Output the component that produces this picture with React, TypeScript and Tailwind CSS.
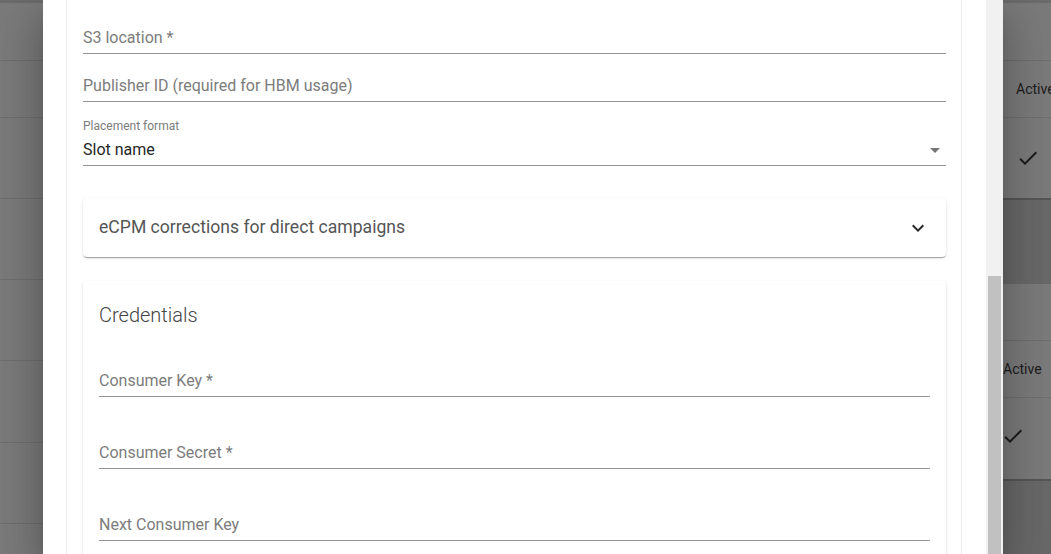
import React from "react";

const Check = ({ className = "" }: { className?: string }) => (
  <svg viewBox="0 0 24 24" width="24" height="24" className={className} fill="#1c1c1c">
    <path d="M9 16.17L4.83 12l-1.42 1.41L9 19 21 7l-1.41-1.41z" />
  </svg>
);

function Field({ label, h }: { label: string; h: string }) {
  return (
    <div className={`${h} flex items-end border-b border-[#949494] pb-[6px]`}>
      <span className="text-[16px] leading-[19px] text-[#7c7c7c]">{label}</span>
    </div>
  );
}

export default function App() {
  return (
    <div className="relative w-[1051px] h-[554px] overflow-hidden font-['Roboto',sans-serif] bg-[#7a7a7a]">
      {/* page behind the backdrop */}
      <div className="flex h-full">
        <div className="w-[43px] flex flex-col">
          <div className="h-[3px] bg-[#6b6b6b]" />
          <div className="h-[58px] border-b border-[#6e6e6e]" />
          <div className="h-[57px] border-b border-[#6e6e6e]" />
          <div className="h-[81px] border-b border-[#6e6e6e]" />
          <div className="h-[81px] border-b border-[#6e6e6e]" />
          <div className="h-[81px] border-b border-[#6e6e6e]" />
          <div className="h-[82px] border-b border-[#6e6e6e]" />
          <div className="h-[81px] border-b border-[#6e6e6e]" />
          <div className="flex-1" />
        </div>
        <div className="flex-1" />
        <div className="w-[48px] flex flex-col text-[14px] text-[#1c1c1c]">
          <div className="h-[3px] bg-[#6b6b6b]" />
          <div className="h-[58px] border-b border-[#6e6e6e]" />
          <div className="h-[57px] border-b border-[#6e6e6e] flex items-center pl-[13px] whitespace-nowrap">Active</div>
          <div className="h-[82px] border-b-2 border-[#555555] flex items-center pl-[13px]">
            <Check />
          </div>
          <div className="h-[84px] bg-[#686868]" />
          <div className="h-[57px] border-b border-[#6e6e6e]" />
          <div className="h-[57px] border-b border-[#6e6e6e] flex items-center whitespace-nowrap">Active</div>
          <div className="h-[83px] border-b-2 border-[#555555] flex items-center pb-[6px]">
            <Check className="-ml-[2px]" />
          </div>
          <div className="flex-1 bg-[#686868]" />
        </div>
      </div>

      {/* dialog */}
      <div className="absolute left-[43px] top-0 w-[960px] h-full flex bg-white shadow-[0_11px_15px_-7px_rgba(0,0,0,0.2),0_24px_38px_3px_rgba(0,0,0,0.14),0_9px_46px_8px_rgba(0,0,0,0.12)]">
        <div className="flex-1 pl-[23px] pr-[24px] overflow-hidden">
          <div className="h-full border-x border-[#ececec] pl-4 pr-[15px]">
            <Field label="S3 location *" h="h-[54px]" />
            <Field label="Publisher ID (required for HBM usage)" h="h-[48px]" />
            <div className="h-[64px] flex flex-col justify-end border-b border-[#949494] pb-[6px]">
              <span className="text-[12px] leading-[14px] text-[#7c7c7c]">Placement format</span>
              <div className="mt-[7px] h-[19px] flex items-center justify-between">
                <span className="text-[16px] leading-[19px] text-[#262626]">Slot name</span>
                <svg viewBox="0 0 24 24" width="24" height="24" fill="#757575" className="mr-[-1px]">
                  <path d="M7 10l5 5 5-5z" />
                </svg>
              </div>
            </div>

            <div className="mt-[32px] h-[59px] rounded-[4px] bg-white shadow-[0_2px_1px_-1px_rgba(0,0,0,0.2),0_1px_1px_0_rgba(0,0,0,0.14),0_1px_3px_0_rgba(0,0,0,0.12)] flex items-center justify-between pl-4 pr-4">
              <span className="text-[17.6px] leading-[21px] text-[#555555]">eCPM corrections for direct campaigns</span>
              <svg viewBox="0 0 24 24" width="24" height="24" fill="#2a2a2a">
                <path d="M16.59 8.59L12 13.17 7.41 8.59 6 10l6 6 6-6z" />
              </svg>
            </div>

            <div className="mt-[24px] rounded-[4px] bg-white shadow-[0_2px_1px_-1px_rgba(0,0,0,0.2),0_1px_1px_0_rgba(0,0,0,0.14),0_1px_3px_0_rgba(0,0,0,0.12)] px-4 pt-[20px] pb-6">
              <div className="text-[20px] leading-[28px] font-light text-[#444444]">Credentials</div>
              <Field label="Consumer Key *" h="h-[68px]" />
              <Field label="Consumer Secret *" h="h-[72px]" />
              <Field label="Next Consumer Key" h="h-[72px]" />
              <div className="h-[72px]" />
            </div>
          </div>
        </div>
        {/* scrollbar */}
        <div className="w-[17px] bg-[#f1f1f1] flex flex-col">
          <div className="mt-[276px] mx-[2px] flex-1 bg-[#c1c1c1]" />
        </div>
      </div>
    </div>
  );
}
